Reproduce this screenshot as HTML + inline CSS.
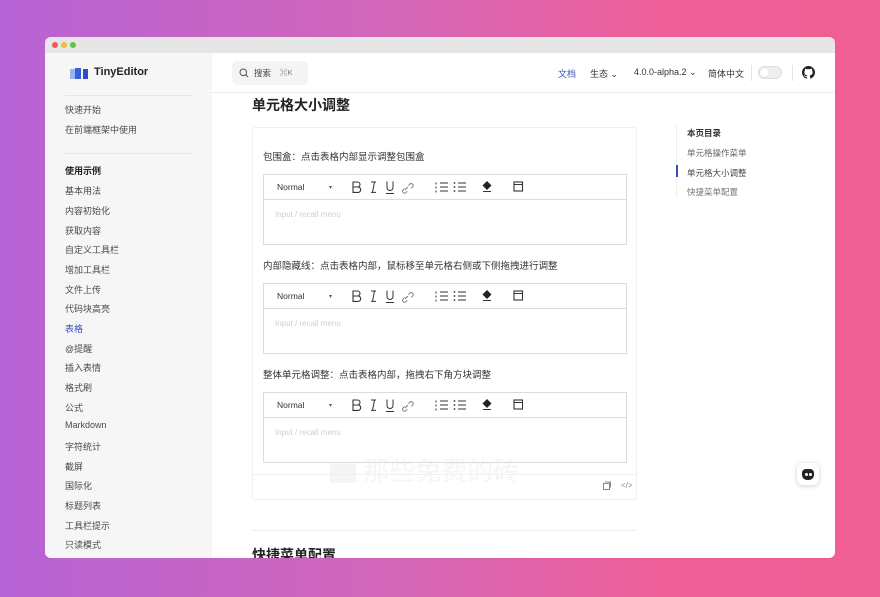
<!DOCTYPE html>
<html><head><meta charset="utf-8"><style>
*{box-sizing:border-box;margin:0;padding:0}
body{width:880px;height:597px;overflow:hidden;background:linear-gradient(90deg,#b663d6 0%,#d466b8 45%,#ee5f98 75%,#f05f93 100%);font-family:"Liberation Sans","Noto Sans CJK SC",sans-serif;position:relative}
.win{position:absolute;left:45px;top:37px;width:790px;height:521px;background:#fff;border-radius:6px;overflow:hidden}
.tb{height:16px;background:#e7e6e7;position:relative}
.dot{position:absolute;top:5px;width:6px;height:6px;border-radius:50%}
.side{position:absolute;left:0;top:16px;width:167px;height:505px;background:#f6f6f7}
.side .it{position:absolute;left:20px;font-size:9px;color:#4a4a4a}
.hdr{position:absolute;left:167px;top:16px;right:0;height:40px;border-bottom:1px solid #ececec;background:#fff}
.abs{position:absolute}
.lbl{position:absolute;left:218px;font-size:9.5px;color:#333}
</style></head><body>
<div class="win">
<div class="tb"><div class="dot" style="left:7px;background:#ee5b55"></div><div class="dot" style="left:16px;background:#f3bb3a"></div><div class="dot" style="left:25px;background:#5dc446"></div></div>
<div class="side">
<div class="abs" style="left:25px;top:14px;width:18px;height:12px"><div class="abs" style="left:0;top:2px;width:5px;height:10px;background:#9ab4f0"></div><div class="abs" style="left:5px;top:1px;width:6px;height:11px;background:#3b5fd9"></div><div class="abs" style="left:13px;top:2px;width:5px;height:10px;background:#2c4fc7"></div></div>
<div class="abs" style="left:49px;top:13px;font-size:11px;color:#222;font-weight:bold">TinyEditor</div>
<div class="abs" style="left:20px;top:42px;width:127px;height:1px;background:#e6e6e6"></div>
<div class="it" style="top:50px">快速开始</div>
<div class="it" style="top:70px">在前端框架中使用</div>
<div class="abs" style="left:20px;top:100px;width:127px;height:1px;background:#e6e6e6"></div>
<div class="it" style="top:111px;font-weight:bold;color:#222">使用示例</div>
<div class="it" style="top:131px">基本用法</div>
<div class="it" style="top:151px">内容初始化</div>
<div class="it" style="top:171px">获取内容</div>
<div class="it" style="top:190px">自定义工具栏</div>
<div class="it" style="top:210px">增加工具栏</div>
<div class="it" style="top:230px">文件上传</div>
<div class="it" style="top:249px">代码块高亮</div>
<div class="it" style="top:269px;color:#3b4fb8">表格</div>
<div class="it" style="top:289px">@提醒</div>
<div class="it" style="top:308px">插入表情</div>
<div class="it" style="top:328px">格式刷</div>
<div class="it" style="top:348px">公式</div>
<div class="it" style="top:367px">Markdown</div>
<div class="it" style="top:387px">字符统计</div>
<div class="it" style="top:407px">截屏</div>
<div class="it" style="top:426px">国际化</div>
<div class="it" style="top:446px">标题列表</div>
<div class="it" style="top:466px">工具栏提示</div>
<div class="it" style="top:485px">只读模式</div>
</div>
<div class="hdr">
<div class="abs" style="left:20px;top:8px;width:76px;height:24px;background:#f4f4f5;border-radius:5px"></div>
<svg class="abs" style="left:27px;top:15px" width="10" height="10" viewBox="0 0 10 10"><circle cx="4.3" cy="4.3" r="3.3" fill="none" stroke="#555" stroke-width="1"/><path d="M6.8 6.8L9 9" stroke="#555" stroke-width="1"/></svg>
<div class="abs" style="left:42px;top:14px;font-size:8.5px;color:#444">搜索</div>
<div class="abs" style="left:68px;top:14px;font-size:7.5px;color:#777">⌘K</div>
<div class="abs" style="left:346px;top:14px;font-size:9px;color:#3b55b8">文档</div>
<div class="abs" style="left:378px;top:14px;font-size:9px;color:#333">生态 ⌄</div>
<div class="abs" style="left:422px;top:14px;font-size:9px;color:#333">4.0.0-alpha.2 ⌄</div>
<div class="abs" style="left:496px;top:14px;font-size:9px;color:#333">简体中文</div>
<div class="abs" style="left:539px;top:12px;width:1px;height:16px;background:#e4e4e4"></div>
<div class="abs" style="left:546px;top:13px;width:24px;height:13px;border-radius:7px;background:#eee;border:1px solid #ddd"><div class="abs" style="left:1px;top:1px;width:9px;height:9px;border-radius:50%;background:#fff;box-shadow:0 0 1px #aaa"></div></div>
<div class="abs" style="left:580px;top:12px;width:1px;height:16px;background:#e4e4e4"></div>
<svg class="abs" style="left:590px;top:13px" width="13" height="13" viewBox="0 0 16 16"><path fill="#222" d="M8 0C3.58 0 0 3.58 0 8c0 3.54 2.29 6.53 5.47 7.59.4.07.55-.17.55-.38 0-.19-.01-.82-.01-1.49-2.01.37-2.53-.49-2.690-.94-.09-.23-.48-.94-.82-1.13-.28-.15-.68-.52-.01-.53.63-.01 1.08.58 1.23.82.72 1.21 1.87.87 2.33.66.07-.52.28-.87.51-1.07-1.78-.2-3.64-.89-3.64-3.95 0-.87.31-1.59.82-2.15-.08-.2-.36-1.02.08-2.12 0 0 .67-.21 2.2.82.64-.18 1.32-.27 2-.27s1.36.09 2 .27c1.53-1.04 2.2-.82 2.2-.82.44 1.1.16 1.92.08 2.12.51.56.82 1.27.82 2.15 0 3.07-1.87 3.75-3.65 3.95.29.25.54.73.54 1.48 0 1.07-.01 1.93-.01 2.2 0 .21.15.46.55.38A8.013 8.013 0 0016 8c0-4.42-3.58-8-8-8z"/></svg>
</div>
<div class="abs" style="left:207px;top:58px;font-size:14px;font-weight:bold;color:#222">单元格大小调整</div>
<div class="abs" style="left:207px;top:90px;width:385px;height:373px;border:1px solid #f0f0f0;border-radius:3px"></div>
<div class="abs" style="left:285px;top:414px;font-size:26px;color:#f5f5f5">▆ 那些免费的砖</div>
<div class="lbl" style="top:112px">包围盒：点击表格内部显示调整包围盒</div>
<div class="lbl" style="top:221px">内部隐藏线：点击表格内部，鼠标移至单元格右侧或下侧拖拽进行调整</div>
<div class="lbl" style="top:330px">整体单元格调整：点击表格内部，拖拽右下角方块调整</div>

<svg class="abs" style="left:218px;top:137px" width="364" height="328" viewBox="0 0 364 328">
<defs>
<g id="tbar">
<rect x="0.5" y="0.5" width="363" height="70" fill="none" stroke="#dcdcdc"/>
<line x1="0" y1="25.5" x2="364" y2="25.5" stroke="#dcdcdc"/>
<text x="14" y="16" font-size="8.5" fill="#333" font-family="Liberation Sans, sans-serif">Normal</text>
<text x="66" y="15" font-size="6" fill="#555">▾</text>
<path d="M90 8h4.5a2.5 2.5 0 0 1 0 5H90zM90 13h5a2.7 2.7 0 0 1 0 5.4H90zM90 8v10.4" fill="none" stroke="#333" stroke-width="1.1"/>
<path d="M108 8h5M108 18.4h5M111.5 8l-2 10.4" fill="none" stroke="#333" stroke-width="1"/>
<path d="M124 7.5v6a3 3 0 0 0 6 0v-6M123 19.5h8" fill="none" stroke="#333" stroke-width="1"/>
<path d="M142 16l3-3M141.5 14.5l-1.5 1.5a2 2 0 0 0 2.8 2.8l1.5-1.5M145.5 11.5l1.5-1.5a2 2 0 0 1 2.8 2.8l-1.5 1.5" fill="none" stroke="#777" stroke-width="0.9"/>
<path d="M177 9h8M177 13h8M177 17h8M173 8.5v2M173 12.5v2M173 16.5v2" fill="none" stroke="#333" stroke-width="1"/>
<path d="M195 9h8M195 13h8M195 17h8" fill="none" stroke="#333" stroke-width="1"/>
<circle cx="191.5" cy="9" r="0.9" fill="#333"/><circle cx="191.5" cy="13" r="0.9" fill="#333"/><circle cx="191.5" cy="17" r="0.9" fill="#333"/>
<path d="M224 7l4.5 4.5-4.5 4.5-4.5-4.5z" fill="#222"/><path d="M220 17.5h8" stroke="#333" stroke-width="1"/>
<rect x="251" y="8" width="8.5" height="9" fill="none" stroke="#333" stroke-width="1.1"/><line x1="251" y1="10.5" x2="259.5" y2="10.5" stroke="#333"/>
<text x="12" y="43" font-size="8" fill="#cfcfcf" font-family="Liberation Sans, sans-serif">Input / recall menu</text>
</g>
</defs>
<use href="#tbar" x="0" y="0"/>
<use href="#tbar" x="0" y="109"/>
<use href="#tbar" x="0" y="218"/>
</svg>

<div class="abs" style="left:208px;top:437px;width:383px;height:1px;background:#f0f0f0"></div>
<svg class="abs" style="left:557px;top:444px" width="10" height="10" viewBox="0 0 10 10"><rect x="1.5" y="2.5" width="6" height="6" fill="none" stroke="#888"/><path d="M3 1h5.5v5.5" fill="none" stroke="#888"/></svg>
<div class="abs" style="left:576px;top:444px;font-size:8px;color:#888">&lt;/&gt;</div>
<div class="abs" style="left:207px;top:493px;width:385px;height:1px;background:#eee"></div>
<div class="abs" style="left:207px;top:508px;font-size:14px;font-weight:bold;color:#222">快捷菜单配置</div>
<div class="abs" style="left:631px;top:88px;width:1px;height:72px;background:#eee"></div>
<div class="abs" style="left:631px;top:128px;width:2px;height:12px;background:#3b4fb8"></div>
<div class="abs" style="left:642px;top:90px;font-size:8.5px;font-weight:bold;color:#333">本页目录</div>
<div class="abs" style="left:642px;top:110px;font-size:8.5px;color:#666">单元格操作菜单</div>
<div class="abs" style="left:642px;top:130px;font-size:8.5px;color:#444">单元格大小调整</div>
<div class="abs" style="left:642px;top:149px;font-size:8.5px;color:#777">快捷菜单配置</div>
<div class="abs" style="left:752px;top:426px;width:22px;height:22px;border-radius:6px;background:#fff;box-shadow:0 1px 5px rgba(0,0,0,.2)"><div class="abs" style="left:5px;top:6px;width:12px;height:11px;border-radius:4px 4px 5px 5px;background:#222"></div><div class="abs" style="left:8px;top:10px;width:3px;height:3px;border-radius:50%;background:#fff"></div><div class="abs" style="left:12px;top:10px;width:3px;height:3px;border-radius:50%;background:#fff"></div></div>
</div>
</body></html>
